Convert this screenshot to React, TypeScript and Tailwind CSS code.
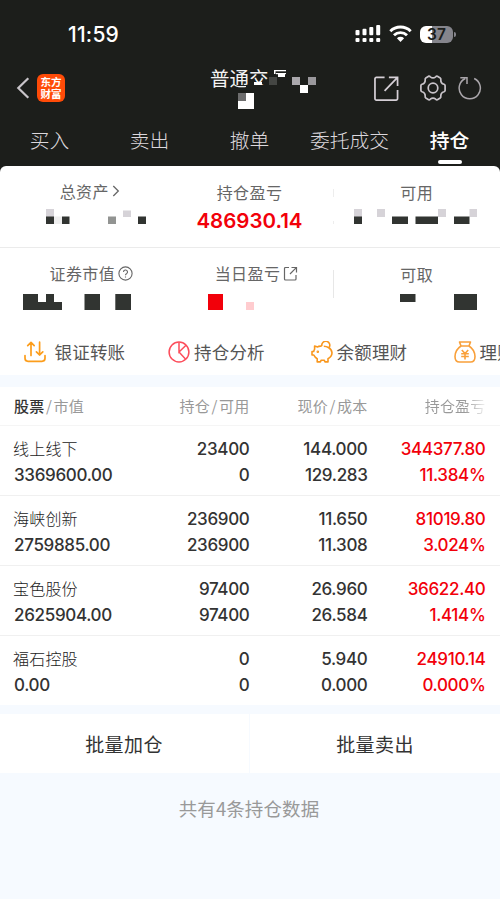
import React from "react";

type Block = [x: number, y: number, w: number, h: number, fill: string];

const DARK = "#313431";
const LIGHT = "#d6d3d8";

const titleBlocks: Block[] = [
  [238, 93, 16, 16, "#ffffff"],
  [238, 93, 8, 8, "#6d6d6d"],
  [268.5, 66, 20, 23, "#1c1e1b"],
  [246, 85, 42, 4, "#1c1e1b"],
  [254, 82, 8, 3, "#ffffff"],
  [274, 70, 12, 1.3, "#ffffff"],
  [274, 70, 1.5, 4, "#ffffff"],
  [278, 73, 7, 4, "#ffffff"],
  [276, 73, 10, 1.2, "#ffffff"],
  [269, 77, 8, 8, "#444643"],
  [292, 77, 8, 8, "#aaa8ac"],
  [308, 77, 8, 8, "#9a989c"],
  [300, 85, 8, 8, "#ffffff"],
];

const cardBlocks: Block[] = [
  [46, 209, 8, 8, LIGHT],
  [46, 216.5, 8, 7.5, DARK],
  [54, 216.5, 8, 7.5, "#eeeeee"],
  [62, 216.5, 7.5, 7.5, DARK],
  [108, 216.5, 8, 7.5, "#929492"],
  [123, 210.5, 8, 6.5, LIGHT],
  [138, 216.5, 8, 7.5, DARK],
  [354, 209, 8, 8, LIGHT],
  [377, 209, 8, 8, LIGHT],
  [438, 209, 8, 8, LIGHT],
  [469.5, 209, 7.5, 8, LIGHT],
  [354, 216.5, 8, 7.5, DARK],
  [392, 216.5, 16, 7.5, DARK],
  [415.5, 216.5, 22.5, 7.5, DARK],
  [454, 216.5, 15.5, 7.5, DARK],
  [23, 294, 15, 16, DARK],
  [46, 294, 8, 8, DARK],
  [23, 302, 39, 8, DARK],
  [84.5, 294, 15.5, 16, DARK],
  [115.3, 294, 15.7, 16, DARK],
  [208, 294, 15, 16, "#f2000a"],
  [246, 302, 8, 8, "#ffcccf"],
  [400, 294, 15.5, 8, DARK],
  [454, 294, 23, 16, DARK],
];

function Mosaic({ blocks, top, height }: { blocks: Block[]; top: number; height: number }) {
  return (
    <svg
      className="pointer-events-none absolute inset-0 h-full w-full"
      viewBox={`0 ${top} 500 ${height}`}
      preserveAspectRatio="none"
    >
      {blocks.map(([x, y, w, h, fill], i) => (
        <rect key={i} x={x} y={y} width={w} height={h} fill={fill} />
      ))}
    </svg>
  );
}

function StatusBar() {
  return (
    <div className="flex h-[66px] items-center pl-[68px] pr-[44px] pt-[2px]">
      <span className="font-['Inter'] text-[21px] font-medium leading-none tracking-[0.2px] text-white">11:59</span>
      <svg className="ml-auto" width="26" height="18" viewBox="0 0 26 18" fill="#fff">
        <rect x="0.5" y="5" width="4" height="5.3" rx="1" />
        <rect x="7.5" y="3.8" width="4" height="6.5" rx="1" />
        <rect x="14.3" y="2" width="4" height="8.3" rx="1" />
        <rect x="21.2" y="0" width="4" height="10.3" rx="1" />
        <rect x="0.5" y="13" width="4" height="4" rx="1" />
        <rect x="7.5" y="13" width="4" height="4" rx="1" />
        <rect x="14.3" y="13" width="4" height="4" rx="1" />
        <rect x="21.2" y="13" width="4" height="4" rx="1" />
      </svg>
      <svg className="ml-[8px]" width="23" height="18" viewBox="0 0 23 18" fill="none" stroke="#fff" strokeWidth="2.9">
        <path d="M1.3 6.2a14.6 14.6 0 0 1 20.4 0" />
        <path d="M5 10.3a9.3 9.3 0 0 1 13 0" />
        <path d="M11.5 17 L7.9 13.3a5.2 5.2 0 0 1 7.2 0z" fill="#fff" stroke="none" />
      </svg>
      <div className="ml-[8px] flex h-[17px] w-[33px] items-center justify-center rounded-[6px] bg-linear-to-r from-white from-37% to-[#85858c] to-37% pt-[1px] font-['Inter'] text-[15.5px] font-semibold leading-none text-[#1c1e1b]">
        37
      </div>
      <div className="ml-[1px] h-[5px] w-[2px] rounded-r-full bg-[#85858c]" />
    </div>
  );
}

function NavBar() {
  return (
    <div className="relative flex h-[49px] items-center pl-[16px] pr-[18px]">
      <svg className="-mt-[5px]" width="14" height="22" viewBox="0 0 14 22" fill="none" stroke="#c9c5ca" strokeWidth="2.2">
        <path d="M12.3 1.2 2.3 11 12.3 20.8" />
      </svg>
      <div className="-mt-[5px] ml-[7px] flex h-[28px] w-[28px] flex-col items-center justify-center rounded-[6px] bg-[#ff4b08] text-[10.5px] font-bold leading-[12px] text-white">
        <span>东方</span>
        <span>财富</span>
      </div>
      <span className="-mt-[26px] ml-[145px] text-[19.5px] leading-none text-[#f4f4f4]">普通交易</span>
      <div className="-mt-[5px] ml-auto flex items-center">
        <svg className="mr-[20px]" width="25" height="25" viewBox="0 0 26 26" fill="none" stroke="#d5cfd6" strokeWidth="1.8">
          <path d="M11 1.5H2.5a1.5 1.5 0 0 0-1.5 1.5v20.500a1.500 1.500 0 0 0 1.500 1.500H23a1.500 1.500 0 0 0 1.500-1.500V14.500" />
          <path d="M15.500 1.500H24.500V10.500M24.500 1.500 11 15.500" />
        </svg>
        <svg className="mr-[11px]" width="28" height="28" viewBox="0 0 28 28" fill="none" stroke="#c9c4ca" strokeWidth="1.7" strokeLinejoin="round">
          <path d="M9.600 2.200Q10.600 2 11.300 2.800Q14 5 16.700 2.800Q17.400 2 18.400 2.300L21.200 3.900Q22.100 4.500 21.800 5.700Q21.600 9.300 25 10.300Q26 10.700 26.100 11.700V16.300Q26 17.300 25 17.700Q21.600 18.700 21.800 22.300Q22.100 23.500 21.200 24.100L18.400 25.700Q17.400 26 16.700 25.200Q14 23 11.300 25.200Q10.600 26 9.600 25.700L6.800 24.100Q5.900 23.500 6.200 22.300Q6.400 18.700 3 17.700Q2 17.300 1.900 16.300V11.700Q2 10.700 3 10.300Q6.400 9.300 6.200 5.700Q5.900 4.500 6.800 3.900Z" />
          <circle cx="14" cy="14" r="4.800" />
        </svg>
        <svg width="24" height="26" viewBox="0 0 24 26" fill="none" stroke="#aaa6ab" strokeWidth="1.5">
          <path d="M16.200 3.500A10.600 10.600 0 1 1 7.300 3.500" />
          <path d="M2.300 2.800H9V9" />
        </svg>
      </div>
      <Mosaic blocks={titleBlocks} top={66} height={49} />
    </div>
  );
}

function Tabs() {
  return (
    <div className="grid h-[51px] grid-cols-5 text-[19.8px] font-light text-[#dcd8dd]">
      {["买入", "卖出", "撤单", "委托成交"].map((t) => (
        <span key={t} className="flex h-[50px] items-center justify-center whitespace-nowrap pr-[1px]">{t}</span>
      ))}
      <span className="relative flex h-[50px] items-center justify-center pr-[1px] font-medium text-white">
        持仓
        <i className="absolute bottom-[1px] left-[38px] h-[4px] w-[24px] rounded-full bg-white" />
      </span>
    </div>
  );
}

function Label({ children, className = "" }: { children: React.ReactNode; className?: string }) {
  return <div className={`flex h-[20px] items-center justify-center gap-[3px] text-[16px] tracking-[0.4px] text-[#666] ${className}`}>{children}</div>;
}

function Summary() {
  return (
    <section className="relative h-[209px] rounded-t-[6px] bg-white">
      <div className="grid h-[82px] grid-cols-3 border-b border-[#ebebeb] pt-[15px]">
        <Label className="mr-[-13px]">
          总资产
          <svg width="8" height="12" viewBox="0 0 8 12" fill="none" stroke="#666" strokeWidth="1.300"><path d="M1.300 1 6.300 6 1.300 11" /></svg>
        </Label>
        <div className="text-center">
          <Label className="ml-[-1px] mt-[1px]">持仓盈亏</Label>
          <div className="ml-[-1px] mt-[5px] font-['Inter'] text-[20.500px] font-semibold leading-[28px] text-[#f2000a]">486930.14</div>
        </div>
        <div className="relative">
          <Label className="mt-[1px]">可用</Label>
          <i className="absolute left-0 top-[8px] h-[8px] w-px bg-[#ededed]" />
          <i className="absolute left-0 top-[40px] h-[3px] w-px bg-[#ededed]" />
        </div>
      </div>
      <div className="grid h-[81px] grid-cols-3 pt-[15px]">
        <Label className="mr-[-16px]">
          证券市值
          <svg width="15" height="15" viewBox="0 0 15 15" fill="none" stroke="#666" strokeWidth="1.100">
            <circle cx="7.500" cy="7.500" r="6.600" />
            <path d="M5.500 6a2 2 0 1 1 3 1.700c-.8.400-1 .8-1 1.600M7.500 10.400v1.200" />
          </svg>
        </Label>
        <Label className="ml-[13px]">
          当日盈亏
          <svg width="15" height="15" viewBox="0 0 15 15" fill="none" stroke="#666" strokeWidth="1.200">
            <path d="M6 1.500H2.500a1 1 0 0 0-1 1V13a1 1 0 0 0 1 1H12a1 1 0 0 0 1-1V9M8.500 1.500H13.500V6.500M13.300 1.700 7 8" />
          </svg>
        </Label>
        <div className="relative">
          <Label className="mt-[1px]">可取</Label>
          <i className="absolute left-0 top-[7px] h-[28px] w-px bg-[#e7e7e7]" />
        </div>
      </div>
      <div className="flex h-[46px] items-center overflow-hidden whitespace-nowrap pl-[24px] text-[17.500px] tracking-[0.200px] text-[#555]">
        <div className="flex w-[143.500px] shrink-0 items-center gap-[8.500px]">
          <svg width="22" height="22" viewBox="0 0 22 22" fill="none" stroke="#fc9d1c" strokeWidth="1.700" strokeLinecap="round" strokeLinejoin="round">
            <path d="M1 14.500v2.800a3 3 0 0 0 3 3H18a3 3 0 0 0 3-3V14.500M7 14.500V1.300M3.700 4.600 7 1.300 10.200 4.600M15.600 1.200V14M12.400 10.800 15.600 14l3.200-3.200" />
          </svg>
          银证转账
        </div>
        <div className="flex w-[143px] shrink-0 items-center gap-[4.500px]">
          <svg width="22" height="22" viewBox="0 0 22 22" fill="none" stroke="#fc4d5b" strokeWidth="1.500">
            <circle cx="11" cy="11" r="9.900" />
            <path d="M11 1.200V11L18 4.200M11 11l6.700 7.200" />
          </svg>
          持仓分析
        </div>
        <div className="flex w-[143px] shrink-0 items-center gap-[4px]">
          <svg width="22" height="22" viewBox="0 0 22 22" fill="none" stroke="#f9971d" strokeWidth="1.600" strokeLinejoin="round">
            <path d="M10.500 5.200Q7.500 5 6.600 6L3.600 5V8.200Q3 9 2.700 10.500H1V14H2.800Q3.800 16.300 6.200 17.700V20.900H9.400L10.200 19.200H13.200L14 20.900H17V17.800Q21 15.500 21 11.800Q20.700 8.200 17.400 6.500Q15.500 5.300 12.800 5.200" />
            <path d="M10.900 5.200A4 4 0 1 1 18 6.600" />
            <circle cx="6.800" cy="10.800" r=".5" fill="#f9971d" />
          </svg>
          余额理财
        </div>
        <div className="flex shrink-0 items-center gap-[4px]">
          <svg width="22" height="22" viewBox="0 0 22 22" fill="none" stroke="#f9a03a" strokeWidth="1.600" strokeLinejoin="round">
            <path d="M5.500 1H16.500L15 5H7ZM7 5Q1.200 8.800 1 15.500Q1 21 5.500 21H16.500Q21 21 21 15.500Q20.800 8.800 15 5" />
            <path d="M7.800 9 11 12.500 14.200 9M7.200 12.700h7.600M7.200 15.500h7.600M11 12.500V18.500" />
          </svg>
          理财
        </div>
      </div>
      <Mosaic blocks={cardBlocks} top={166} height={209} />
    </section>
  );
}

const COLS = "grid grid-cols-[132px_117.5px_118px_118px] text-right";

const holdings = [
  ["线上线下", "3369600.00", "23400", "0", "144.000", "129.283", "344377.80", "11.384%"],
  ["海峡创新", "2759885.00", "236900", "236900", "11.650", "11.308", "81019.80", "3.024%"],
  ["宝色股份", "2625904.00", "97400", "97400", "26.960", "26.584", "36622.40", "1.414%"],
  ["福石控股", "0.00", "0", "0", "5.940", "0.000", "24910.14", "0.000%"],
];

function Holdings() {
  return (
    <section className="mt-[12px] bg-white">
      <div className={`${COLS} h-[39px] items-center border-b border-[#f5f5f5] text-[15px] tracking-[0.200px] text-[#999]`}>
        <span className="pl-[14px] text-left"><b className="font-medium text-[#333]">股票</b><span className="mx-[1.500px]">/</span>市值</span>
        <span>持仓<span className="mx-[1.500px]">/</span>可用</span>
        <span>现价<span className="mx-[1.500px]">/</span>成本</span>
        <span>
          <span className="bg-linear-to-r from-[#999] from-65% to-[#f4f4f4] bg-clip-text text-transparent">持仓盈亏</span>
        </span>
      </div>
      {holdings.map(([name, value, held, free, price, cost, profit, rate], i) => (
        <div
          key={name}
          className={`${COLS} ${i === 3 ? "h-[69px]" : "h-[70px] border-b border-[#f0f0f0]"} pt-[10px] font-['Inter'] text-[17px] font-medium leading-[26px] tracking-[-0.320px] text-[#333]`}
        >
          <div className="pl-[14px] text-left">
            <div className="-ml-px -mt-px h-[27px] font-['Noto_Sans_CJK_SC'] text-[16px] font-light tracking-[0.200px] text-[#222]">{name}</div>
            <div>{value}</div>
          </div>
          <div><div>{held}</div><div>{free}</div></div>
          <div><div>{price}</div><div>{cost}</div></div>
          <div className="text-[#f2000a]"><div>{profit}</div><div>{rate}</div></div>
        </div>
      ))}
    </section>
  );
}

export default function App() {
  return (
    <main className="h-[899px] w-[500px] overflow-hidden bg-[#f6faff] font-['Noto_Sans_CJK_SC',sans-serif]">
      <div className="bg-[#1c1e1b]">
        <StatusBar />
        <NavBar />
        <Tabs />
        <Summary />
      </div>
      <Holdings />
      <div className="mt-[9px] grid h-[59px] grid-cols-2 bg-white text-[19px] tracking-[0.400px] text-[#333]">
        <span className="flex items-center justify-center border-r border-[#f6faff] pr-[1px] pt-[1px]">批量加仓</span>
        <span className="flex items-center justify-center pt-[1px]">批量卖出</span>
      </div>
      <p className="pr-[2px] pt-[21px] text-center text-[18.500px] leading-[28px] tracking-[0.100px] text-[#999]">共有4条持仓数据</p>
    </main>
  );
}
